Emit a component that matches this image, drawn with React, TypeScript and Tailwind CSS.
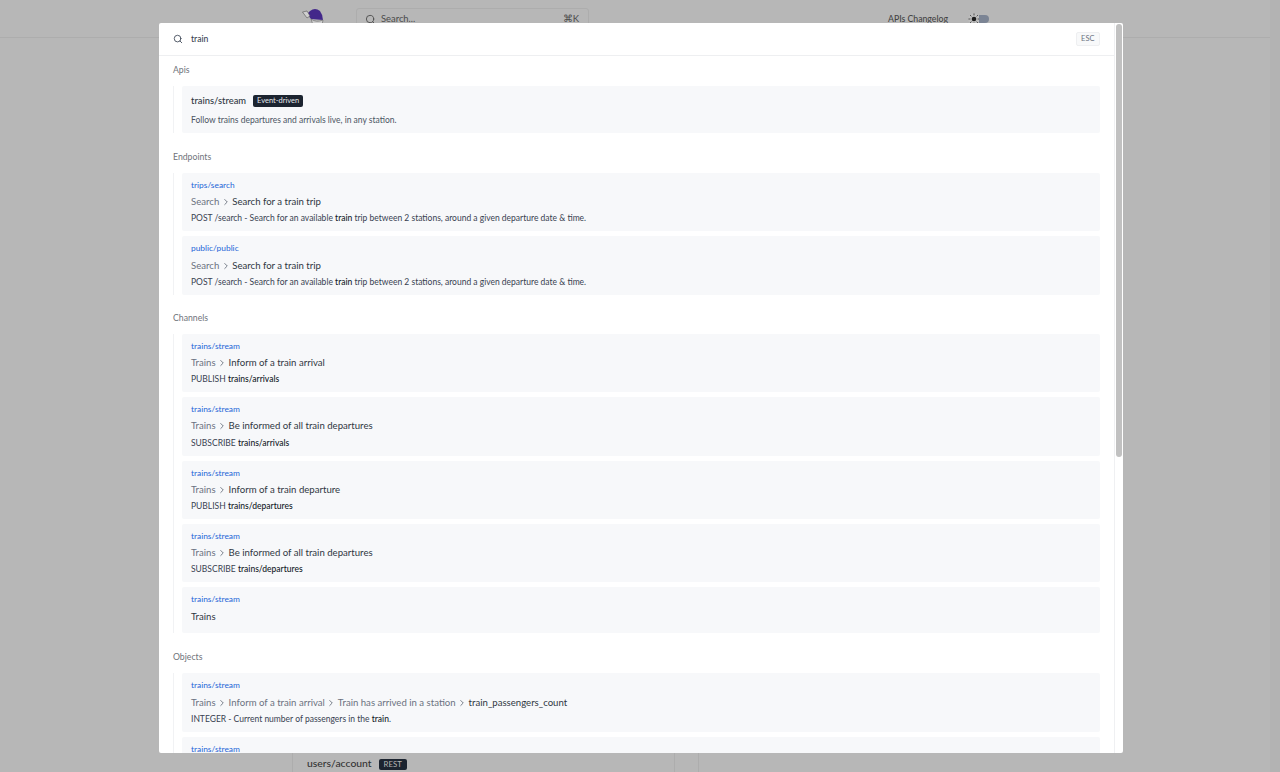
import { ChevronRight, Search } from "lucide-react";
import type { ReactNode } from "react";

type Row = { link?: string; crumbs: string[]; last: string; desc: ReactNode };

const B = ({ children }: { children: ReactNode }) => <span className="font-medium text-[#111827]">{children}</span>;

const postDesc = (
  <>
    POST /search - Search for an available <B>train</B> trip between 2 stations, around a given departure date &amp; time.
  </>
);

const endpoints: Row[] = [
  { link: "trips/search", crumbs: ["Search"], last: "Search for a train trip", desc: postDesc },
  { link: "public/public", crumbs: ["Search"], last: "Search for a train trip", desc: postDesc },
];

const channels: Row[] = [
  { link: "trains/stream", crumbs: ["Trains"], last: "Inform of a train arrival", desc: <>PUBLISH <B>trains/arrivals</B></> },
  { link: "trains/stream", crumbs: ["Trains"], last: "Be informed of all train departures", desc: <>SUBSCRIBE <B>trains/arrivals</B></> },
  { link: "trains/stream", crumbs: ["Trains"], last: "Inform of a train departure", desc: <>PUBLISH <B>trains/departures</B></> },
  { link: "trains/stream", crumbs: ["Trains"], last: "Be informed of all train departures", desc: <>SUBSCRIBE <B>trains/departures</B></> },
];

function ResultRow({ row }: { row: Row }) {
  return (
    <div className="flex h-[58.4px] flex-col justify-between rounded-[2px] bg-[#f7f8fa] px-[9px] py-[6px]">
      <div className="text-[8.4px] leading-[13px] text-[#1e66d8]">{row.link}</div>
      <div className="flex items-center text-[9.6px] leading-[16px]">
        {row.crumbs.map((c, i) => (
          <span key={i} className="flex items-center text-[#6b7280]">
            {c}
            <ChevronRight className="mx-[1.5px] h-[10px] w-[10px] text-[#374151]" strokeWidth={1.6} />
          </span>
        ))}
        <span className="text-[#2f3742]">{row.last}</span>
      </div>
      <div className="text-[8.5px] leading-[13px] text-[#374151]">{row.desc}</div>
    </div>
  );
}

function Section({ title, children, mt }: { title: string; children: ReactNode; mt: string }) {
  return (
    <section className={mt}>
      <h3 className="px-[14px] text-[8.7px] leading-[12px] text-[#6f737a]">{title}</h3>
      <div className="ml-[14px] mr-[14px] mt-[10px] flex flex-col gap-[5px] border-l border-[#f1f2f4] pl-[8px]">{children}</div>
    </section>
  );
}

function App() {
  return (
    <div className="relative flex h-[772px] w-[1280px] overflow-hidden bg-[#b7b7b7]" style={{ fontFamily: "Lato, 'Open Sans', sans-serif" }}>
      {/* page behind the overlay */}
      <div className="flex h-full min-w-0 flex-1 flex-col">
        <header className="flex h-[38px] shrink-0 items-center border-b border-[#adadad]">
          <div className="ml-[302px] w-[22px]">
            <svg viewBox="0 0 22 22" className="h-[22px] w-[22px]">
              <path d="M5 6 L8 3 Q13 -1 18 3 Q21 7 21 12 L9 11 Z" fill="#43288a" />
              <path d="M0.5 4 L5 3 L8 8 L5 10 Z" fill="#cfcfcf" stroke="#555" strokeWidth="0.6" />
              <path d="M9 11 Q14 15 21 12 L20 17 L11 17 Z" fill="#cfcfcf" stroke="#666" strokeWidth="0.6" />
            </svg>
          </div>
          <div className="ml-[32px] mt-[1px] flex h-[22px] w-[233px] items-center rounded-[3px] border border-[#adadad] pl-[8px] pr-[9px] text-[9.4px] text-[#4b4b4b]">
            <Search className="h-[11px] w-[11px]" strokeWidth={2} />
            <span className="ml-[5px]">Search...</span>
            <span className="ml-auto text-[9.5px]">⌘K</span>
          </div>
          <div className="ml-[299px] text-[8.7px] font-medium text-[#444]">APIs Changelog</div>
          <div className="ml-[20px] flex items-center">
            <svg viewBox="0 0 12 12" className="h-[12px] w-[12px]">
              <circle cx="6" cy="6" r="5.8" fill="#bdbdbd" />
              <circle cx="6" cy="6" r="2.3" fill="#1c1c1c" />
              <g stroke="#555" strokeWidth="1" strokeLinecap="round">
                <path d="M6 .8v1.2M6 10v1.2M.8 6h1.2M10 6h1.2M2.3 2.3l.8.8M8.9 8.9l.8.8M2.3 9.7l.8-.8M8.9 3.1l.8-.8" />
              </g>
            </svg>
            <div className="-ml-[1px] h-[8px] w-[10px] rounded-r-full bg-[#7b8494]" />
          </div>
        </header>
        <div className="flex flex-1 justify-start">
          <div className="ml-[292px] flex w-[383px] flex-col justify-end border-x border-[#adadad] pl-[14px]">
            <div className="flex h-[16px] items-center gap-[7px]">
              <span className="text-[10.4px] font-medium text-[#333]">users/account</span>
              <span className="rounded-[2px] bg-[#1c2430] px-[5px] text-[7.8px] leading-[11px] text-[#b7b7b7]">REST</span>
            </div>
          </div>
          <div className="ml-[23px] border-l border-[#adadad]" />
        </div>
      </div>
      <div className="h-full w-[10px] shrink-0 bg-[#b3b3b3]" />

      {/* search dialog */}
      <div className="absolute left-[159px] top-[23px] flex h-[730px] w-[964px] overflow-hidden rounded-[2px] bg-white">
        <div className="min-w-0 flex-1 border-r border-[#eff0f2]">
          <div className="flex h-[33px] items-center border-b border-[#eeeff1] pl-[14px] pr-[14px]">
            <Search className="h-[10px] w-[10px] text-[#374151]" strokeWidth={2} />
            <span className="ml-[8px] text-[8.6px] font-medium text-[#374151]">train</span>
            <span className="ml-auto rounded-[2px] border border-[#eeeff1] bg-[#f8f9fa] px-[4.5px] py-[1px] text-[7.5px] leading-[10px] text-[#6b7280]">ESC</span>
          </div>

          <Section title="Apis" mt="mt-[8px]">
            <div className="flex h-[47px] flex-col justify-center gap-[5.5px] rounded-[2px] bg-[#f7f8fa] px-[9px] pt-[2px]">
              <div className="flex items-center gap-[7px]">
                <span className="text-[9.4px] font-medium leading-[14px] text-[#2f3742]">trains/stream</span>
                <span className="rounded-[2px] bg-[#1c2430] px-[4px] text-[7.5px] leading-[12px] text-[#e5e7eb]">Event-driven</span>
              </div>
              <div className="text-[8.5px] leading-[13px] text-[#4b5563]">Follow trains departures and arrivals live, in any station.</div>
            </div>
          </Section>

          <Section title="Endpoints" mt="mt-[18px]">
            {endpoints.map((r, i) => (
              <ResultRow key={i} row={r} />
            ))}
          </Section>

          <Section title="Channels" mt="mt-[17px]">
            {channels.map((r, i) => (
              <ResultRow key={i} row={r} />
            ))}
            <div className="flex h-[46px] flex-col justify-center gap-[3px] rounded-[2px] bg-[#f7f8fa] px-[9px] pb-[3px]">
              <div className="text-[8.4px] leading-[13px] text-[#1e66d8]">trains/stream</div>
              <div className="text-[9.6px] leading-[16px] text-[#2f3742]">Trains</div>
            </div>
          </Section>

          <Section title="Objects" mt="mt-[18px]">
            <ResultRow
              row={{
                link: "trains/stream",
                crumbs: ["Trains", "Inform of a train arrival", "Train has arrived in a station"],
                last: "train_passengers_count",
                desc: <>INTEGER - Current number of passengers in the <B>train</B>.</>,
              }}
            />
            <ResultRow row={{ link: "trains/stream", crumbs: [], last: "", desc: "" }} />
          </Section>
        </div>
        <div className="w-[8px] shrink-0 px-[1px] pt-[1px]">
          <div className="h-[433px] rounded-full bg-[#c1c1c1]" />
        </div>
      </div>
    </div>
  );
}

export default App;
